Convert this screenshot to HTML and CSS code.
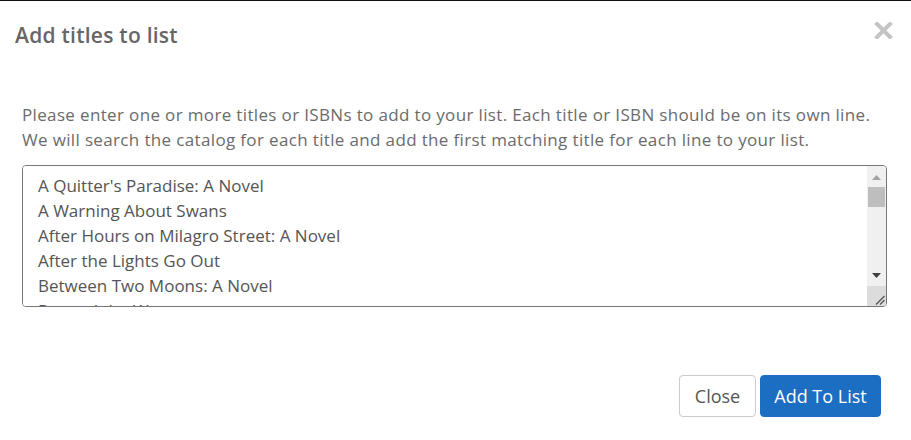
FILE: index.html
```html
<!DOCTYPE html>
<html>
<head>
<meta charset="utf-8">
<link rel="stylesheet" href="styles.css">
</head>
<body>
<div class="modal">
  <div class="modal-header">
    <h4 class="modal-title">Add titles to list</h4>
    <button class="close" aria-label="Close">
      <svg width="19" height="17" viewBox="0 0 19 17"><path d="M3 2 L16 15 M16 2 L3 15" stroke="#c4c4c4" stroke-width="4" stroke-linecap="square"/></svg>
    </button>
  </div>
  <div class="modal-body">
    <p class="intro">Please enter one or more titles or ISBNs to add to your list. Each title or ISBN should be on its own line.<br>We will search the catalog for each title and add the first matching title for each line to your list.</p>
    <div class="textbox">
      <textarea class="titles">A Quitter's Paradise: A Novel
A Warning About Swans
After Hours on Milagro Street: A Novel
After the Lights Go Out
Between Two Moons: A Novel
Beyond the Wave
Dear Edward
Demon Copperhead
Hello Beautiful
Homecoming
Horse
Lessons in Chemistry
Mad Honey
Remarkably Bright Creatures
Small Mercies
The Covenant of Water
The Heaven &amp; Earth Grocery Store
The House in the Pines
The Last Thing He Told Me
The Wager
Tom Lake
Trust
Yellowface</textarea>
      <div class="vscroll">
        <div class="sb-btn">
          <svg width="19" height="20" viewBox="0 0 19 20"><path d="M5 14 L14 14 L9.5 9 Z" fill="#a3a3a3"/></svg>
        </div>
        <div class="sb-track"><div class="sb-thumb"></div></div>
        <div class="sb-btn">
          <svg width="19" height="20" viewBox="0 0 19 20"><path d="M5 7 L14 7 L9.5 12 Z" fill="#404040"/></svg>
        </div>
        <div class="sb-grip">
          <svg width="19" height="20" viewBox="0 0 19 20"><path d="M9 18.5 L17.5 10 M13 18.5 L17.5 14" stroke="#555" stroke-width="1.3"/></svg>
        </div>
      </div>
    </div>
  </div>
  <div class="modal-footer">
    <button class="btn btn-default">Close</button>
    <button class="btn btn-primary">Add To List</button>
  </div>
</div>
</body>
</html>
```

FILE: styles.css
```css
html, body {
  margin: 0;
  padding: 0;
  background: #fff;
}
body {
  font-family: "Open Sans", "Liberation Sans", sans-serif;
  color: #666;
  border-top: 1px solid #111;
}
.modal {
  width: 911px;
}
.modal-header {
  display: flex;
  justify-content: space-between;
  align-items: flex-start;
  padding: 20px 18px 0 15px;
  height: 78px;
  box-sizing: border-box;
}
.modal-title {
  margin: 0;
  font-size: 21px;
  font-weight: 600;
  letter-spacing: 0.25px;
  line-height: 28px;
  color: #666;
}
.close {
  border: 0;
  background: none;
  padding: 0;
  margin-top: 1px;
  cursor: pointer;
  line-height: 0;
}
.modal-body {
  padding: 23px 25px 0 22px;
}
.intro {
  margin: 0 0 13px 0;
  font-size: 17px;
  letter-spacing: 0.35px;
  line-height: 25px;
  color: #6b6b6b;
}
.textbox {
  display: flex;
  width: 865px;
  height: 142px;
  box-sizing: border-box;
  border: 1px solid #767676;
  border-radius: 4px;
  overflow: hidden;
}
.titles {
  flex: 1;
  min-width: 0;
  box-sizing: border-box;
  margin: 0;
  padding: 7px 15px;
  border: 0;
  outline: none;
  font-family: "Open Sans", "Liberation Sans", sans-serif;
  font-size: 17px;
  line-height: 25px;
  color: #555;
  resize: none;
  overflow: hidden;
  background: #fff;
}
.vscroll {
  display: flex;
  flex-direction: column;
  width: 19px;
  background: #f0f0f0;
}
.sb-btn {
  height: 20px;
  line-height: 0;
}
.sb-track {
  flex: 1;
  padding: 1px 1px 0 1px;
}
.sb-thumb {
  height: 20px;
  background: #bebebe;
}
.sb-grip {
  height: 20px;
  background: #dcdcdc;
  line-height: 0;
}
.modal-footer {
  display: flex;
  justify-content: flex-end;
  gap: 4px;
  padding: 68px 30px 0 0;
}
.btn {
  height: 42px;
  box-sizing: border-box;
  border-radius: 4px;
  font-family: "Open Sans", "Liberation Sans", sans-serif;
  font-size: 18px;
  padding: 0 10px;
  cursor: pointer;
}
.btn-default {
  background: #fff;
  border: 1px solid #ccc;
  color: #555;
  width: 77px;
}
.btn-primary {
  background: #1b6ec2;
  border: 1px solid #1b6ec2;
  color: #fff;
  width: 121px;
}
```
